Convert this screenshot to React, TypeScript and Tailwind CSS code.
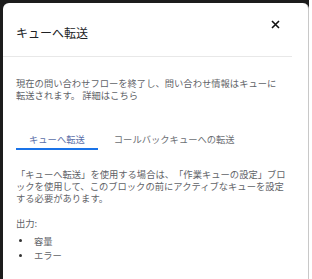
import React from "react";

export default function App() {
  const font = { fontFamily: '"Noto Sans CJK JP", "Noto Sans", sans-serif' };
  return (
    <div className="w-[312px] h-[279px] bg-white flex overflow-hidden [text-spacing-trim:space-all]" style={font}>
      <div className="w-[309px] h-full bg-[#1c1c1c] pt-[3px] pl-[3px] flex flex-col">
        <div className="flex-1 bg-white rounded-tl-[6px] rounded-tr-[6px] border-r border-[#c8c8c8] flex flex-col">
          <div className="mr-4 pl-[13px] pt-[22px] pb-[15px] border-b border-[#e8e8e8] flex justify-between items-start">
            <div className="text-[12px] leading-[16px] text-[#202124]">キューへ転送</div>
            <svg width="9" height="9" viewBox="0 0 9 9" className="mt-[-5px] mr-[12px]">
              <path d="M1 1 L8 8 M8 1 L1 8" stroke="#111" strokeWidth="1.6" />
            </svg>
          </div>
          <div className="pl-[13px] w-[288px] text-[9.3px] leading-[12px] text-[#5f6368] mt-[20px]">
            現在の問い合わせフローを終了し、問い合わせ情報はキューに<br />転送されます。 詳細はこちら
          </div>
          <div className="flex pl-[13px] mt-[24px]">
            <div className="px-[13px] pt-[8px] pb-[3px] border-b-2 border-[#1a73e8] text-[9.3px] leading-[12px] text-[#5a6ea8]">
              キューへ転送
            </div>
            <div className="pl-[16px] pt-[8px] pb-[5px] text-[9.3px] leading-[12px] text-[#6b6e73]">
              コールバックキューへの転送
            </div>
          </div>
          <div className="pl-[13px] w-[287px] mt-[18px] text-[9.3px] leading-[12.2px] text-[#5f6368]">
            「キューへ転送」を使用する場合は、「作業キューの設定」ブロックを使用して、このブロックの前にアクティブなキューを設定する必要があります。
          </div>
          <div className="pl-[13px] mt-[12px] text-[9.3px] leading-[12px] text-[#5f6368]">出力:</div>
          <ul className="pl-[13px] mt-[5px] text-[9.3px] leading-[14.5px] text-[#5f6368]">
            <li className="flex items-center">
              <span className="w-[3px] h-[3px] rounded-full bg-[#333] ml-[3px] mr-[12px]"></span>
              容量
            </li>
            <li className="flex items-center">
              <span className="w-[3px] h-[3px] rounded-full bg-[#333] ml-[3px] mr-[12px]"></span>
              エラー
            </li>
          </ul>
        </div>
      </div>
    </div>
  );
}
